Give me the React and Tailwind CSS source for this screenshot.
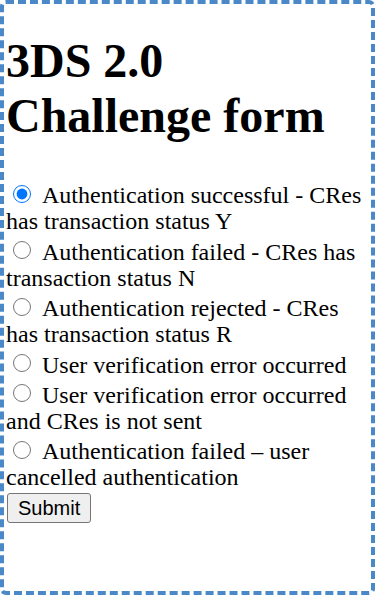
const options = [
  "Authentication successful - CRes has transaction status Y",
  "Authentication failed - CRes has transaction status N",
  "Authentication rejected - CRes has transaction status R",
  "User verification error occurred",
  "User verification error occurred and CRes is not sent",
  "Authentication failed \u2013 user cancelled authentication",
];

const App = () => {
  return (
    <div className="box-border h-[595px] w-[375px] overflow-hidden rounded-[6px] border-4 border-dashed border-[#4a88c8] bg-white px-[2px] font-['Liberation_Serif','Times_New_Roman',serif] text-black">
      <h1 className="mt-[29px] mb-[35px] text-[48px] font-bold leading-[55px]">3DS 2.0 Challenge form</h1>
      <form className="text-[24px] leading-[26.5px]" onSubmit={(e) => e.preventDefault()}>
        {options.map((label, i) => (
          <label key={i} className="block">
            <input
              type="radio"
              name="challenge"
              defaultChecked={i === 0}
              className="mr-[11px] ml-[7px] mt-[6.5px] h-[18px] w-[18px]"
            />
            {label}
          </label>
        ))}
        <button
          type="submit"
          className="mt-[2px] ml-[1px] rounded-[3px] border border-[#767676] bg-[#efefef] px-[10px] py-[3px] font-['Liberation_Sans',Arial,sans-serif] text-[20px] leading-[22px]"
        >
          Submit
        </button>
      </form>
    </div>
  );
};

export default App;
